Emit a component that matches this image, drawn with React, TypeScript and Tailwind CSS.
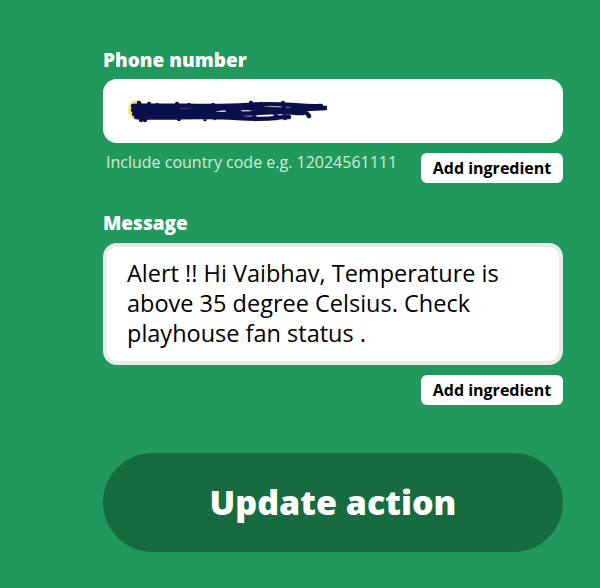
import React from "react";

const Scribble = () => (
  <svg width="200" height="28" viewBox="0 0 200 28" className="block">
    <ellipse cx="10" cy="13" rx="9" ry="10" fill="#f0e35a" opacity="0.9" />
    <path
      d="M6 9 C40 7 80 11 120 8 S170 10 194 9 M6 13 C30 11 60 16 90 12 S150 15 182 12 M7 17 C50 15 90 19 130 16 S165 17 176 16 M9 20 C40 22 70 18 110 21 S150 19 162 20 M12 6 L14 23 M22 7 L18 23 M30 8 C34 22 40 24 44 10 M50 7 L52 22 M62 8 C70 20 72 6 78 22 M86 8 L88 21 M98 9 C104 23 110 5 116 21 M124 6 L128 22 M134 7 C140 22 146 7 150 21 M156 6 L158 21 M164 8 C170 17 176 9 182 19 M178 12 L199 11"
      stroke="#0b0f4a"
      strokeWidth="4.4"
      fill="none"
      strokeLinecap="round"
    />
  </svg>
);

const IngredientButton = () => (
  <button className="h-[30px] w-[142px] rounded-[6px] bg-white text-[16px] font-bold text-black leading-none">
    Add ingredient
  </button>
);

export default function App() {
  return (
    <div
      className="w-[600px] h-[588px] bg-[#21995c] overflow-hidden"
      style={{ fontFamily: "'Open Sans', 'Noto Sans', sans-serif" }}
    >
      <div className="ml-[103px] w-[460px] pt-[48px]">
        <label className="block text-[19px] leading-[24px] font-extrabold text-white">
          Phone number
        </label>
        <div className="mt-[7px] h-[64px] rounded-[14px] bg-white flex items-center pl-[24px]">
          <Scribble />
        </div>
        <div className="mt-[10px] flex items-start justify-between">
          <span className="pl-[3px] text-[16px] leading-[18px] text-[#d3ecdd]">
            Include country code e.g. 12024561111
          </span>
          <IngredientButton />
        </div>

        <label className="mt-[28px] block text-[19px] leading-[24px] font-extrabold text-white">
          Message
        </label>
        <div className="mt-[8px] h-[122px] rounded-[14px] border-[4px] border-[#e9ebea] bg-white pl-[20px] pt-[11px] text-[23.5px] leading-[30px] font-medium text-black">
          Alert !! Hi Vaibhav, Temperature is
          <br />
          above 35 degree Celsius. Check
          <br />
          playhouse fan status .
        </div>
        <div className="mt-[10px] flex justify-end">
          <IngredientButton />
        </div>

        <button className="mt-[48px] w-full h-[99px] rounded-full bg-[#166c3f] text-white text-[34px] font-extrabold">
          Update action
        </button>
      </div>
    </div>
  );
}
